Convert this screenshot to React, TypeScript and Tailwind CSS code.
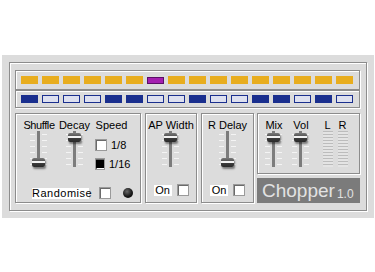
import React from "react";

const yellow = [0, 0, 0, 0, 0, 0, 1, 0, 0, 0, 0, 0, 0, 0, 0, 0];
const blue = [1, 0, 0, 0, 1, 1, 0, 0, 1, 0, 0, 1, 1, 0, 1, 0];

const etched = "border border-[#8c8c8c] shadow-[inset_1px_1px_0_#ffffff,1px_1px_0_#ffffff]";

function Slider(props: { pos: "top" | "bottom" }) {
    const ticks = [3, 9, 15, 21, 27, 33];
    return (
        <div className="relative w-[20px] h-[36px] mx-auto">
            <div className="absolute left-[8px] top-0 w-[3px] h-[36px] bg-[#7c7c7c]" />
            {ticks.map((t) => (
                <React.Fragment key={t}>
                    <div className="absolute left-[1px] w-[5px] h-px bg-[#f4f4f4]" style={{ top: t }} />
                    <div className="absolute left-[13px] w-[5px] h-px bg-[#f4f4f4]" style={{ top: t }} />
                </React.Fragment>
            ))}
            <div
                className={`absolute left-[3px] w-[13px] h-[9px] rounded-[2px] bg-[linear-gradient(to_bottom,#7a7a7a_0%,#5a5a5a_30%,#f2f2f2_34%,#f2f2f2_50%,#3c3c3c_56%,#2a2a2a_100%)] shadow-[1px_2px_2px_rgba(0,0,0,0.45)] ${props.pos === "top" ? "top-[2px]" : "top-[27px]"}`}
            />
        </div>
    );
}

function Check(props: { on?: boolean }) {
    return (
        <div className="w-[12px] h-[12px] bg-white border border-[#9a9a9a] shadow-[inset_1px_1px_0_#6a6a6a] flex items-center justify-center">
            {props.on && <div className="w-[8px] h-[8px] bg-black" />}
        </div>
    );
}

function Label(props: { children: React.ReactNode; tight?: boolean }) {
    return (
        <div className={`h-[12px] leading-[12px] text-[11px] text-black text-center whitespace-nowrap ${props.tight ? "tracking-[-0.4px]" : ""}`}>
            {props.children}
        </div>
    );
}

function Meter() {
    return (
        <div className="w-[10px] h-[36px] mx-auto bg-[repeating-linear-gradient(to_bottom,#bcbcbc_0px,#bcbcbc_1px,#e4e4e4_1px,#e4e4e4_3px)]" />
    );
}

export default function App() {
    return (
        <div className="w-[375px] h-[272px] bg-white pt-[55px] pl-[2px] font-['Liberation_Sans',Arial,sans-serif]">
            <div className="w-[372px] h-[163px] bg-[#dcdcdc] pl-[7px] pt-[7px]">
                <div className={`w-[358px] h-[149px] ${etched} pl-[5px] pt-[7px]`}>
                    {/* sequencer */}
                    <div className={`w-[345px] h-[20px] ${etched} flex items-center gap-[4px] pl-[5px]`}>
                        {yellow.map((v, i) =>
                            v ? (
                                <div key={i} className="w-[17px] h-[7px] bg-[#a41fb0] border border-[#5a0f66]" />
                            ) : (
                                <div key={i} className="w-[17px] h-[8px] bg-[#e8ad1e]" />
                            )
                        )}
                    </div>
                    <div className={`w-[345px] h-[18px] ${etched} flex items-center gap-[4px] pl-[5px]`}>
                        {blue.map((v, i) => (
                            <div
                                key={i}
                                className={`w-[17px] h-[8px] border border-[#1a2f8e] ${v ? "bg-[#1a2f8e]" : "bg-[#dde0ef]"}`}
                            />
                        ))}
                    </div>

                    <div className="flex mt-[5px] w-[345px] h-[90px]">
                        {/* Shuffle / Decay / Speed */}
                        <div className={`w-[126px] h-[90px] ${etched} pt-[5px] pl-[6px]`}>
                            <div className="flex">
                                <div className="w-[34px]">
                                    <Label tight>Shuffle</Label>
                                    <Slider pos="bottom" />
                                </div>
                                <div className="w-[36px] pl-[1px]">
                                    <Label>Decay</Label>
                                    <Slider pos="top" />
                                </div>
                                <div className="w-[36px] pl-[3px]">
                                    <Label>Speed</Label>
                                    <div className="flex items-center gap-[4px] mt-[8px]">
                                        <Check />
                                        <span className="text-[11px] leading-[12px]">1/8</span>
                                    </div>
                                    <div className="flex items-center gap-[4px] mt-[7px]">
                                        <Check on />
                                        <span className="text-[11px] leading-[12px]">1/16</span>
                                    </div>
                                </div>
                            </div>
                            <div className="flex items-center mt-[17px] pl-[10px]">
                                <div className="w-[57px] h-[11px] bg-white text-[11px] leading-[11px] tracking-[0.5px] text-center">Randomise</div>
                                <div className="ml-[10px]"><Check /></div>
                                <div className="ml-[12px] w-[10px] h-[10px] rounded-full bg-[radial-gradient(circle_at_40%_35%,#6a6a6a_0%,#1a1a1a_55%,#000_100%)]" />
                            </div>
                        </div>

                        {/* AP Width */}
                        <div className={`ml-[4px] w-[52px] h-[90px] ${etched} pt-[5px]`}>
                            <Label>AP Width</Label>
                            <Slider pos="top" />
                            <div className="flex items-center justify-center gap-[5px] mt-[17px]">
                                <div className="w-[18px] h-[11px] bg-white text-[11px] leading-[11px] text-center">On</div>
                                <Check />
                            </div>
                        </div>

                        {/* R Delay */}
                        <div className={`ml-[4px] w-[53px] h-[90px] ${etched} pt-[5px]`}>
                            <Label>R Delay</Label>
                            <Slider pos="bottom" />
                            <div className="flex items-center justify-center gap-[5px] mt-[17px]">
                                <div className="w-[18px] h-[11px] bg-white text-[11px] leading-[11px] text-center">On</div>
                                <Check />
                            </div>
                        </div>

                        {/* Mix / Vol / meters + logo */}
                        <div className="ml-[3px] w-[103px] flex flex-col gap-[4px]">
                            <div className={`h-[61px] ${etched} pt-[5px] pl-[4px] flex`}>
                                <div className="w-[24px]">
                                    <Label>Mix</Label>
                                    <Slider pos="top" />
                                </div>
                                <div className="w-[24px] ml-[3px]">
                                    <Label>Vol</Label>
                                    <Slider pos="top" />
                                </div>
                                <div className="w-[15px] ml-[7px]">
                                    <Label>L</Label>
                                    <Meter />
                                </div>
                                <div className="w-[15px]">
                                    <Label>R</Label>
                                    <Meter />
                                </div>
                            </div>
                            <div className="h-[25px] bg-[#7b7b7b] pl-[5px] flex items-end pb-[1px] text-[#e2e2e2]">
                                <span className="text-[19px] leading-[22px]">Chopper</span>
                                <span className="text-[12px] leading-[16px] ml-[2px]">1.0</span>
                            </div>
                        </div>
                    </div>
                </div>
            </div>
        </div>
    );
}
